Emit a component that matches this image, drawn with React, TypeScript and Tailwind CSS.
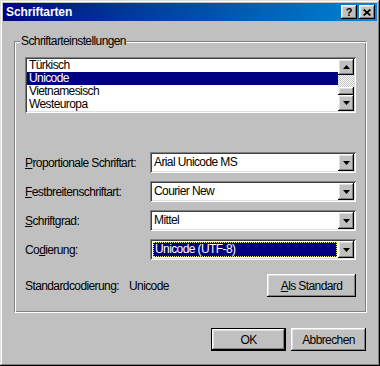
import React from "react";

const raised =
  "bg-[#c0c0c0] shadow-[inset_-1px_-1px_#000000,inset_1px_1px_#ffffff,inset_-2px_-2px_#808080,inset_2px_2px_#dfdfdf]";
const sunken =
  "shadow-[inset_1px_1px_#808080,inset_-1px_-1px_#ffffff,inset_2px_2px_#404040,inset_-2px_-2px_#dfdfdf]";

function Down() {
  return (
    <svg width="7" height="4" viewBox="0 0 7 4">
      <polygon points="0,0 7,0 3.5,4" fill="#000" />
    </svg>
  );
}
function Up() {
  return (
    <svg width="7" height="4" viewBox="0 0 7 4">
      <polygon points="0,4 7,4 3.5,0" fill="#000" />
    </svg>
  );
}

function Combo({ value, selected }: { value: string; selected?: boolean }) {
  return (
    <div className={`flex-1 h-[21px] bg-white p-[2px] flex ${sunken}`}>
      {selected ? (
        <div className="flex-1 m-[1px] bg-[#000080] text-white border border-dotted border-[#e8e890] pl-[1px] leading-[13px]">
          {value}
        </div>
      ) : (
        <div className="flex-1 pl-[2px] leading-[17px]">{value}</div>
      )}
      <div className={`w-[16px] h-[17px] flex items-center justify-center ${raised}`}>
        <Down />
      </div>
    </div>
  );
}

export default function App() {
  const rows: { label: React.ReactNode; value: string; selected?: boolean }[] = [
    {
      label: (
        <>
          <span className="underline">P</span>roportionale Schriftart:
        </>
      ),
      value: "Arial Unicode MS",
    },
    {
      label: (
        <>
          <span className="underline">F</span>estbreitenschriftart:
        </>
      ),
      value: "Courier New",
    },
    {
      label: (
        <>
          <span className="underline">S</span>chriftgrad:
        </>
      ),
      value: "Mittel",
    },
    {
      label: (
        <>
          Co<span className="underline">d</span>ierung:
        </>
      ),
      value: "Unicode (UTF-8)",
      selected: true,
    },
  ];
  const items = ["Türkisch", "Unicode", "Vietnamesisch", "Westeuropa"];

  return (
    <div className="w-[380px] h-[366px] bg-[#c0c0c0] p-[3px] flex flex-col font-['Liberation_Sans',Arial,sans-serif] text-[12px] tracking-[-0.6px] text-black shadow-[inset_-1px_-1px_#000000,inset_1px_1px_#dfdfdf,inset_-2px_-2px_#808080,inset_2px_2px_#ffffff]">
      {/* title bar */}
      <div className="h-[18px] flex items-center bg-linear-to-r from-[#000080] to-[#1084d0] pl-[3px] pr-[2px]">
        <span className="flex-1 text-white font-bold tracking-[-0.1px] leading-[18px]">Schriftarten</span>
        <div className="flex gap-[2px]">
          <div className={`w-[16px] h-[14px] flex items-center justify-center font-bold text-[11px] leading-[14px] tracking-normal ${raised}`}>
            ?
          </div>
          <div className={`w-[16px] h-[14px] flex items-center justify-center ${raised}`}>
            <svg width="8" height="7" viewBox="0 0 8 7">
              <path d="M0.6 0.5L7.4 6.5M7.4 0.5L0.6 6.5" stroke="#000" strokeWidth="1.7" />
            </svg>
          </div>
        </div>
      </div>

      {/* body */}
      <div className="flex-1 flex flex-col pl-[11px] pr-[10px]">
        <fieldset className="mt-[13px] h-[279px] border border-t-[#808080] border-l-[#808080] border-r-white border-b-white shadow-[inset_1px_1px_#ffffff,inset_-1px_-1px_#808080]">
          <legend className="ml-[5px] px-[1px] bg-[#c0c0c0] leading-[14px]">Schriftarteinstellungen</legend>
          <div className="px-[10px] pt-[9px] flex flex-col">
            {/* listbox */}
            <div className={`h-[56px] bg-white p-[2px] flex ${sunken}`}>
              <div className="flex-1 flex flex-col">
                {items.map((it) => (
                  <div
                    key={it}
                    className={`h-[13px] leading-[13px] pl-[2px] ${it === "Unicode" ? "bg-[#000080] text-white" : ""}`}
                  >
                    {it}
                  </div>
                ))}
              </div>
              <div className="w-[16px] flex flex-col">
                <div className={`h-[16px] flex items-center justify-center ${raised}`}>
                  <Up />
                </div>
                <div className="h-[12px] bg-[image:repeating-conic-gradient(#c0c0c0_0%_25%,#ffffff_0%_50%)] bg-[length:2px_2px]" />
                <div className={`h-[8px] ${raised}`} />
                <div className={`h-[16px] flex items-center justify-center ${raised}`}>
                  <Down />
                </div>
              </div>
            </div>

            {/* combos */}
            <div className="mt-[39px] flex flex-col gap-[8px]">
              {rows.map((r, i) => (
                <div key={i} className="flex items-center h-[21px]">
                  <div className="w-[125px]">{r.label}</div>
                  <Combo value={r.value} selected={r.selected} />
                </div>
              ))}
            </div>

            {/* standard row */}
            <div className="mt-[14px] flex items-center h-[23px]">
              <div className="w-[104px]">Standardcodierung:</div>
              <div className="flex-1">Unicode</div>
              <div className={`w-[89px] h-[23px] flex items-center justify-center ${raised}`}>
                <span>
                  <span className="underline">A</span>ls Standard
                </span>
              </div>
            </div>
          </div>
        </fieldset>

        <div className="mt-[15px] flex justify-end gap-[5px] mr-[1px]">
          <div className="w-[75px] h-[23px] border border-black">
            <div className={`w-full h-full flex items-center justify-center ${raised}`}>OK</div>
          </div>
          <div className={`w-[75px] h-[23px] flex items-center justify-center ${raised}`}>Abbrechen</div>
        </div>
      </div>
    </div>
  );
}
